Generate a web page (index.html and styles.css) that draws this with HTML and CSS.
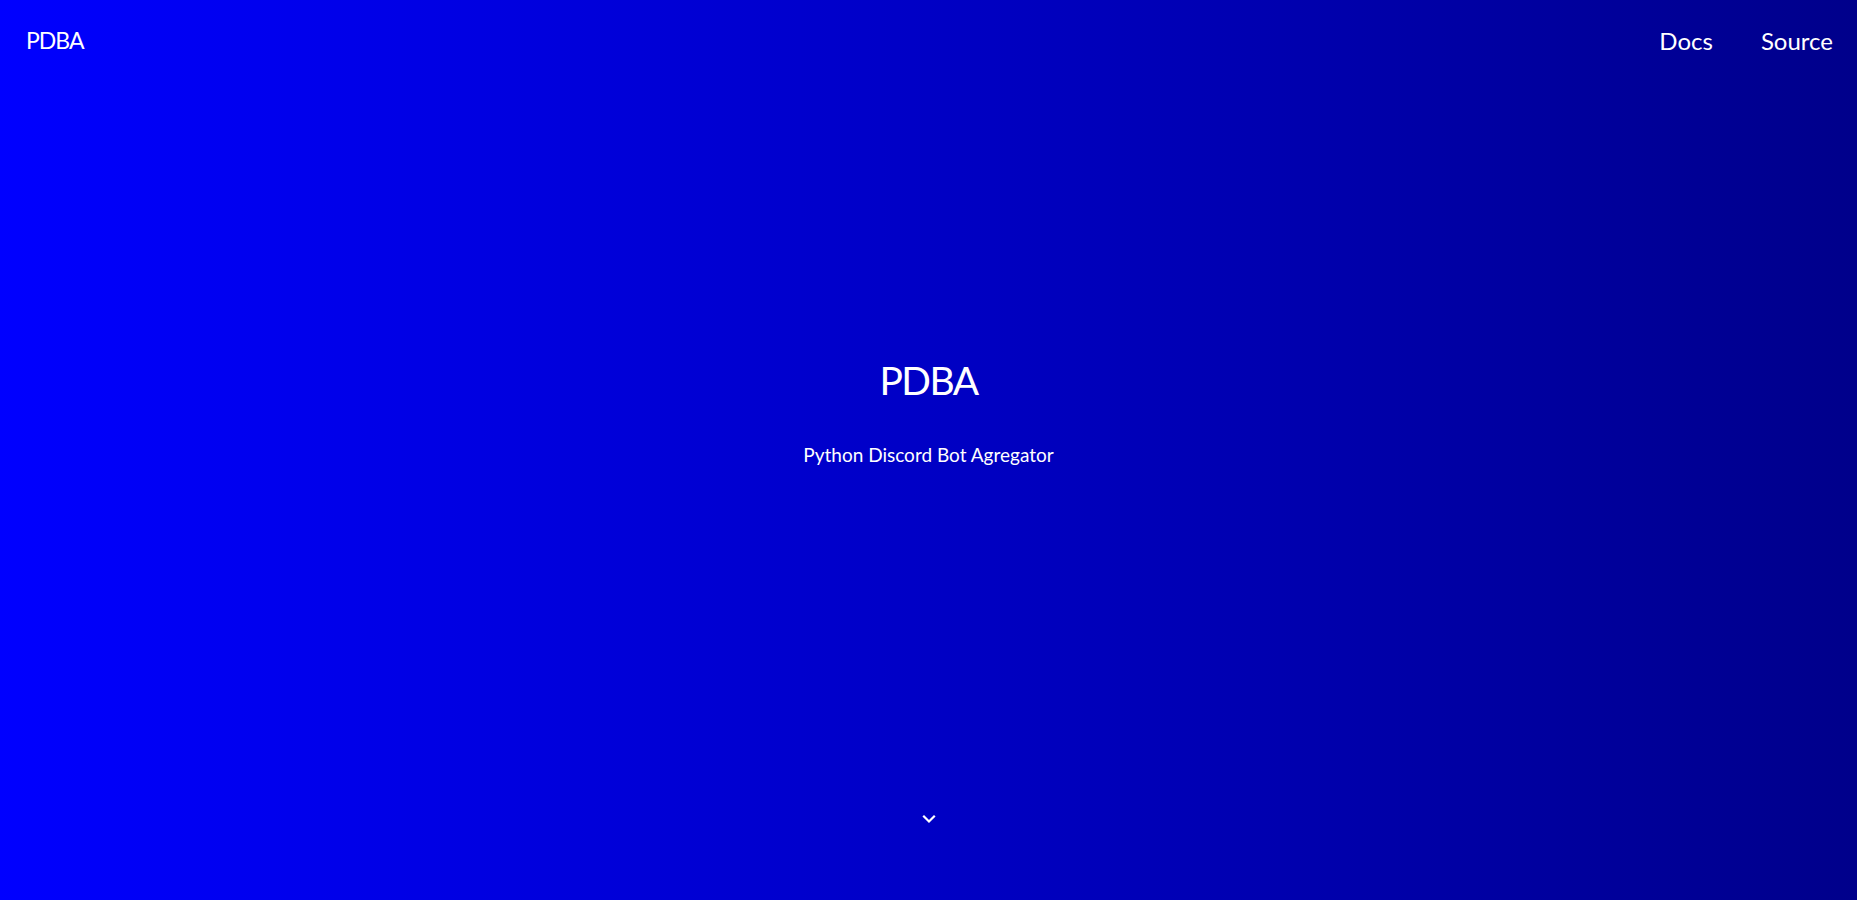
FILE: index.html
```html
<!DOCTYPE html>
<html lang="en">
<head>
<meta charset="utf-8">
<title>PDBA</title>
<link rel="stylesheet" href="styles.css">
</head>
<body>
<div class="page">
  <header class="topbar">
    <a class="brand" href="#">PDBA</a>
    <nav class="nav">
      <a href="#">Docs</a>
      <a href="#">Source</a>
    </nav>
  </header>
  <main class="hero">
    <h1 class="hero-title">PDBA</h1>
    <p class="hero-sub">Python Discord Bot Agregator</p>
  </main>
  <footer class="scroll">
    <svg width="14" height="10" viewBox="0 0 14 10" aria-hidden="true"><path d="M2 2.5 L7 7.5 L12 2.5" fill="none" stroke="#fff" stroke-width="2.2" stroke-linecap="square"/></svg>
  </footer>
</div>
</body>
</html>
```
FILE: styles.css
```css
* { box-sizing: border-box; }
html, body { margin: 0; padding: 0; height: 100%; }
body {
  font-family: "Lato", "Noto Sans", sans-serif;
  color: #fff;
  background: linear-gradient(to right, #0000ff, #00008b);
}
a { color: #fff; text-decoration: none; }
.page {
  height: 900px;
  display: flex;
  flex-direction: column;
}
.topbar {
  display: flex;
  justify-content: space-between;
  align-items: center;
  padding: 20px 24px 0 26px;
  height: 60px;
  font-size: 24px;
}
.brand { font-size: 23px; letter-spacing: -1px; }
.nav { display: flex; gap: 48px; }
.hero {
  flex: 1;
  display: flex;
  flex-direction: column;
  align-items: center;
  padding-top: 295px;
}
.hero-title {
  margin: 0;
  font-size: 39px;
  font-weight: 400;
  letter-spacing: -1.6px;
  line-height: 50px;
}
.hero-sub {
  margin: 38px 0 0;
  font-size: 19px;
}
.scroll {
  display: flex;
  justify-content: center;
  padding-bottom: 76px;
}
.scroll svg { display: block; }
```
